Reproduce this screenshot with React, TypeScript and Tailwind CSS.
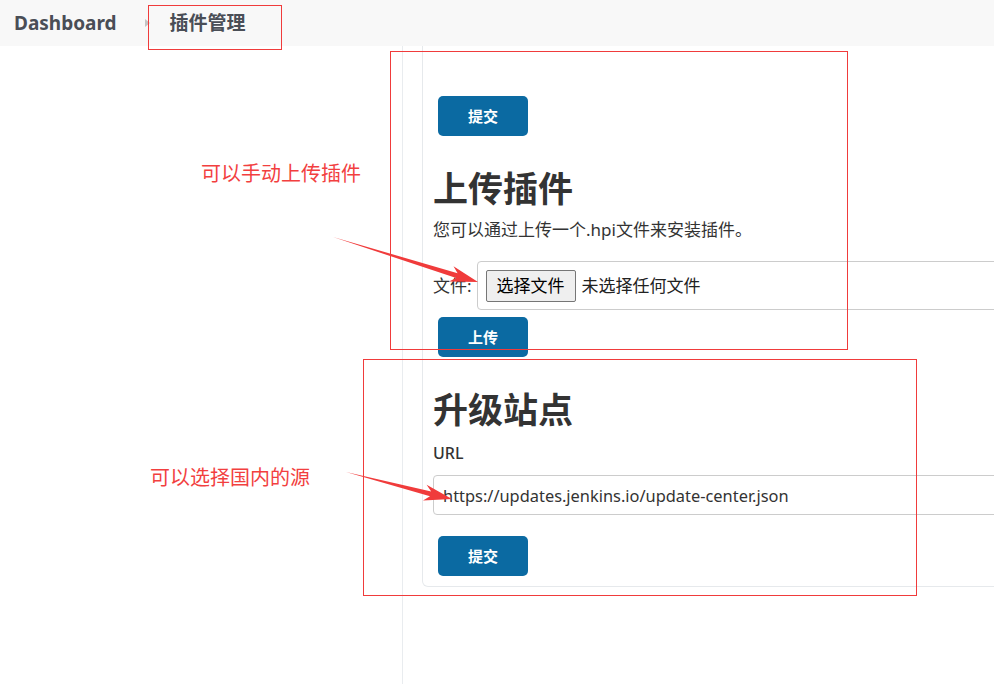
import React from 'react';

const FONT = '"Noto Sans", "Noto Sans CJK SC", sans-serif';

function BlueButton({ label }: { label: string }) {
  return (
    <button className="ml-[5px] h-10 w-[90px] rounded-[5px] bg-[#0b6aa2] text-[15px] font-bold text-white">
      {label}
    </button>
  );
}

function Arrow({ points }: { points: string }) {
  return <polygon points={points} fill="#f03b3b" />;
}

export default function App() {
  return (
    <div
      className="relative flex h-[684px] w-[994px] flex-col overflow-hidden bg-white text-[#333]"
      style={{ fontFamily: FONT }}
    >
      {/* breadcrumb bar */}
      <div className="flex h-[46px] shrink-0 items-center bg-[#f8f8f8] text-[19px] font-bold text-[#4a4e56]">
        <span className="ml-[14px]">Dashboard</span>
        <span className="ml-[28px] h-0 w-0 border-y-[4px] border-l-[5px] border-y-transparent border-l-[#c4c4c4]" />
        <span className="ml-[20px]">插件管理</span>
      </div>

      <div className="flex flex-1">
        {/* side column */}
        <div className="w-[403px] shrink-0 border-r border-[#e9ecef]" />

        {/* content */}
        <div className="pl-[19px]">
          <div className="w-[640px] rounded-bl-[6px] border-x border-b border-[#e6e9ec] px-[10px] pb-[10px] pt-[50px]">
            <BlueButton label="提交" />

            <h2 className="mt-[32px] text-[35px] font-bold leading-[42px]">上传插件</h2>
            <p className="mt-[8px] text-[17px] leading-[24px]">您可以通过上传一个.hpi文件来安装插件。</p>

            <div className="mt-[19px] flex items-center text-[17px]">
              <span>文件:</span>
              <div className="ml-[5px] flex h-[49px] flex-1 items-center rounded-[4px] border border-[#cccccc] pl-[8px]">
                <span className="flex h-[32px] w-[90px] items-center justify-center rounded-[2px] border border-[#767676] bg-[#efefef] text-black">
                  选择文件
                </span>
                <span className="ml-[6px] text-[#222]">未选择任何文件</span>
              </div>
            </div>

            <div className="mt-[7px]">
              <BlueButton label="上传" />
            </div>

            <h2 className="mt-[32px] text-[35px] font-bold leading-[42px]">升级站点</h2>
            <div className="mt-[10px] text-[16px] font-medium leading-[24px]">URL</div>
            <input
              readOnly
              value="https://updates.jenkins.io/update-center.json"
              className="mt-[10px] h-[40px] w-full rounded-[4px] border border-[#cccccc] px-[9px] text-[16.4px] text-[#333] outline-none"
              style={{ fontFamily: FONT }}
            />
            <div className="mt-[21px]">
              <BlueButton label="提交" />
            </div>
          </div>
        </div>
      </div>

      {/* screenshot annotations */}
      <div className="absolute left-[148px] top-[5px] h-[45px] w-[134px] border border-[#f03b3b]" />
      <div className="absolute left-[390px] top-[51px] h-[299px] w-[458px] border border-[#f03b3b]" />
      <div className="absolute left-[363px] top-[359px] h-[237px] w-[554px] border border-[#f03b3b]" />

      <span className="absolute left-[201px] top-[160px] text-[20px] leading-[28px] text-[#f23f3f]">可以手动上传插件</span>
      <span className="absolute left-[150px] top-[464px] text-[20px] leading-[28px] text-[#f23f3f]">可以选择国内的源</span>

      <svg className="pointer-events-none absolute left-0 top-0" width="994" height="684">
        <Arrow points="333,237 456.2,278 448.9,281.6 478,282 453.5,266.2 457.6,273.2" />
        <Arrow points="346,472 430,496.3 423,500.4 452,499 426.6,484.8 431.2,491.5" />
      </svg>
    </div>
  );
}
